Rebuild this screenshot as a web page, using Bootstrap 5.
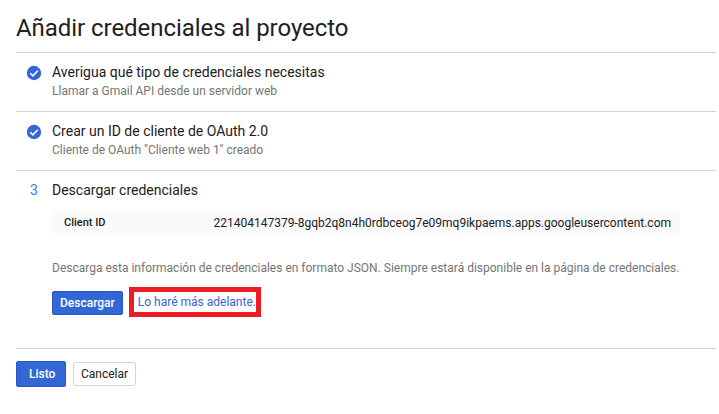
<!DOCTYPE html>
<html lang="es"><head><meta charset="utf-8">
<link href="https://cdn.jsdelivr.net/npm/bootstrap@5.3.0/dist/css/bootstrap.min.css" rel="stylesheet">
<style>
html,body{height:100%;overflow:hidden}
body{font-family:Roboto,"Liberation Sans",sans-serif;color:#212121;background:#fff;font-size:12px}
.sheet{padding:0 3px 0 16px}
.ttl{font-size:24px;font-weight:400;line-height:32px;margin:0;padding-top:12px;height:52px;color:#212121;letter-spacing:-.05px}
.stp{border-top:1px solid #d4d4d4;display:flex;padding-left:10px;height:59px;padding-top:9px}
.ico{width:26px;flex:none;line-height:0;padding-top:3px}
.ico svg{display:block}
.num{width:26px;flex:none;color:#3b78e7;font-size:14px;line-height:20px;padding-left:4px}
.h1x{font-size:14px;line-height:20px;color:#212121}
.sub{font-size:12px;line-height:16px;color:#757575;margin-top:1px}
.last{padding-top:9px;height:178px;border-top:1px solid #d4d4d4;padding-left:10px}
.idbox{margin:11px 0 0 26px;width:628px;height:23px;background:#fafafa;display:flex;align-items:center;justify-content:space-between;padding:1px 9px 0 12px;font-size:12px}
.idk{font-weight:500;font-size:11px;padding-top:1px}
.idv{font-size:12px;color:#212121}
.note{margin:26px 0 0 26px;line-height:16px;color:#757575;white-space:nowrap}
.acts{margin:15px 0 0 26px;display:flex;align-items:center}
.b1{font-family:inherit;font-size:12px;font-weight:500;color:#fff;background:#3367d6;border:1px solid #2a56c6;border-radius:2px;height:24px;padding:0 7px;line-height:20px;box-shadow:none}
.b1:hover{background:#3367d6;color:#fff}
.bigb{height:26px;padding:0 12px;width:50px}
.b2{font-family:inherit;font-size:12px;color:#212121;background:#fff;border:1px solid #d4d4d4;border-radius:2px;height:24px;padding:0 7px;line-height:20px;margin:1px 0 0 7px;width:63px}
.mk{border:5px solid #ed1c24;margin:-4px 0 -2px 6px;height:30px;width:132px;display:flex;align-items:center;padding-left:4px}
.mk a{color:#3b62d0;text-decoration:none;font-size:12px;white-space:nowrap}
.foot{border-top:1px solid #d4d4d4;padding-top:12px;display:flex;align-items:flex-start}
</style></head><body>
<div class="sheet">
<h1 class="ttl">Añadir credenciales al proyecto</h1>
<div class="stp"><div class="ico"><svg width="16" height="16" viewBox="0 0 16 16"><circle cx="8" cy="8" r="7.2" fill="#3367d6"/><path d="M4.3 8.2l2.6 2.6 4.9-5" fill="none" stroke="#fff" stroke-width="1.6"/></svg></div>
<div><div class="h1x">Averigua qué tipo de credenciales necesitas</div><div class="sub">Llamar a Gmail API desde un servidor web</div></div></div>
<div class="stp"><div class="ico"><svg width="16" height="16" viewBox="0 0 16 16"><circle cx="8" cy="8" r="7.2" fill="#3367d6"/><path d="M4.3 8.2l2.6 2.6 4.9-5" fill="none" stroke="#fff" stroke-width="1.6"/></svg></div>
<div><div class="h1x">Crear un ID de cliente de OAuth 2.0</div><div class="sub">Cliente de OAuth "Cliente web 1" creado</div></div></div>
<div class="last">
<div class="d-flex"><div class="num">3</div><div class="h1x">Descargar credenciales</div></div>
<div class="idbox"><span class="idk">Client ID</span><span class="idv">221404147379-8gqb2q8n4h0rdbceog7e09mq9ikpaems.apps.googleusercontent.com</span></div>
<div class="note">Descarga esta información de credenciales en formato JSON. Siempre estará disponible en la página de credenciales.</div>
<div class="acts"><button type="button" class="btn b1">Descargar</button><div class="mk"><a href="#">Lo haré más adelante.</a></div></div>
</div>
<div class="foot"><button type="button" class="btn b1 bigb">Listo</button><button type="button" class="btn b2">Cancelar</button></div>
</div>
</body></html>
